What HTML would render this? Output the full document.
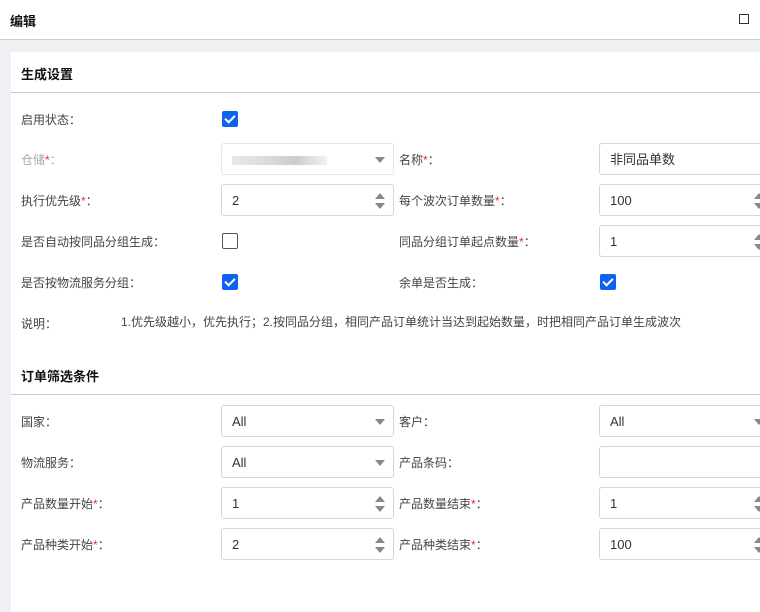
<!DOCTYPE html><html><head><meta charset="utf-8"><style>
*{box-sizing:border-box;margin:0;padding:0}
body{width:760px;height:602px;overflow:hidden;background:#eef0f4;font-family:"Liberation Sans","Noto Sans CJK SC",sans-serif;font-size:12px;color:#333;position:relative}
.hdr{position:absolute;left:0;top:0;width:760px;height:40px;background:#fff;border-bottom:1px solid #ccc}
.hdr b{position:absolute;left:10px;top:11px;font-size:13px;color:#111}
.max{position:absolute;left:739px;top:14px;width:10px;height:10px;border:1px solid #333}
.card{position:absolute;left:11px;top:52px;width:760px;height:560px;background:#fff}
.st{position:absolute;left:21px;font-size:13px;font-weight:bold;color:#111}
.ln{position:absolute;left:11px;width:749px;height:1px;background:#ccc}
.l{position:absolute;color:#444}
.l i{color:#f22;font-style:normal}
.in{position:absolute;height:32px;border:1px solid #d6d6d6;border-radius:3px;background:#fff;padding:0 10px;line-height:32px;font-size:13px;color:#333}
.a{left:221px;width:173px}.b{left:599px;width:170px}
.dd::after{content:"";position:absolute;right:8px;top:13px;border-left:5px solid transparent;border-right:5px solid transparent;border-top:6px solid #888}
.sp::before{content:"";position:absolute;right:8px;top:8px;border-left:5px solid transparent;border-right:5px solid transparent;border-bottom:6px solid #888}
.sp::after{content:"";position:absolute;right:8px;top:18px;border-left:5px solid transparent;border-right:5px solid transparent;border-top:6px solid #888}
.b.sp::before,.b.sp::after,.b.dd::after{right:4px}
.cb{position:absolute;width:16px;height:16px;border-radius:2px;background:#0d63f0}
.cb::after{content:"";position:absolute;left:5px;top:2px;width:4px;height:8px;border:solid #fff;border-width:0 2px 2px 0;transform:rotate(45deg)}
.cb.o{background:#fff;border:1px solid #555}.cb.o::after{display:none}
</style></head><body>
<div class="hdr"><b>编辑</b><div class="max"></div></div>
<div class="card"></div>
<div class="st" style="top:64px">生成设置</div>
<div class="ln" style="top:92px"></div>
<div class="l" style="left:21px;top:111px">启用状态：</div><div class="cb" style="left:222px;top:111px"></div>
<div class="l" style="left:21px;top:151px;color:#aaa">仓储<i>*</i>：</div>
<div class="in a dd" style="top:143px;border-color:#e6e6e6"><span style="display:inline-block;vertical-align:middle;width:95px;height:9px;background:linear-gradient(90deg,#e8e8e8,#ddd,#ccc,#f2f2f2)"></span></div>
<div class="l" style="left:399px;top:151px">名称<i>*</i>：</div><div class="in b" style="top:143px">非同品单数</div>
<div class="l" style="left:21px;top:192px">执行优先级<i>*</i>：</div><div class="in a sp" style="top:184px">2</div>
<div class="l" style="left:399px;top:192px">每个波次订单数量<i>*</i>：</div><div class="in b sp" style="top:184px">100</div>
<div class="l" style="left:21px;top:233px">是否自动按同品分组生成：</div><div class="cb o" style="left:222px;top:233px"></div>
<div class="l" style="left:399px;top:233px">同品分组订单起点数量<i>*</i>：</div><div class="in b sp" style="top:225px">1</div>
<div class="l" style="left:21px;top:274px">是否按物流服务分组：</div><div class="cb" style="left:222px;top:274px"></div>
<div class="l" style="left:399px;top:274px">余单是否生成：</div><div class="cb" style="left:600px;top:274px"></div>
<div class="l" style="left:21px;top:315px">说明：</div>
<div class="l" style="left:121px;top:313px">1.优先级越小，优先执行；2.按同品分组，相同产品订单统计当达到起始数量，时把相同产品订单生成波次</div>
<div class="st" style="top:366px">订单筛选条件</div>
<div class="ln" style="top:394px"></div>
<div class="l" style="left:21px;top:413px">国家：</div><div class="in a dd" style="top:405px">All</div>
<div class="l" style="left:399px;top:413px">客户：</div><div class="in b dd" style="top:405px">All</div>
<div class="l" style="left:21px;top:454px">物流服务：</div><div class="in a dd" style="top:446px">All</div>
<div class="l" style="left:399px;top:454px">产品条码：</div><div class="in b" style="top:446px"></div>
<div class="l" style="left:21px;top:495px">产品数量开始<i>*</i>：</div><div class="in a sp" style="top:487px">1</div>
<div class="l" style="left:399px;top:495px">产品数量结束<i>*</i>：</div><div class="in b sp" style="top:487px">1</div>
<div class="l" style="left:21px;top:536px">产品种类开始<i>*</i>：</div><div class="in a sp" style="top:528px">2</div>
<div class="l" style="left:399px;top:536px">产品种类结束<i>*</i>：</div><div class="in b sp" style="top:528px">100</div>
</body></html>
